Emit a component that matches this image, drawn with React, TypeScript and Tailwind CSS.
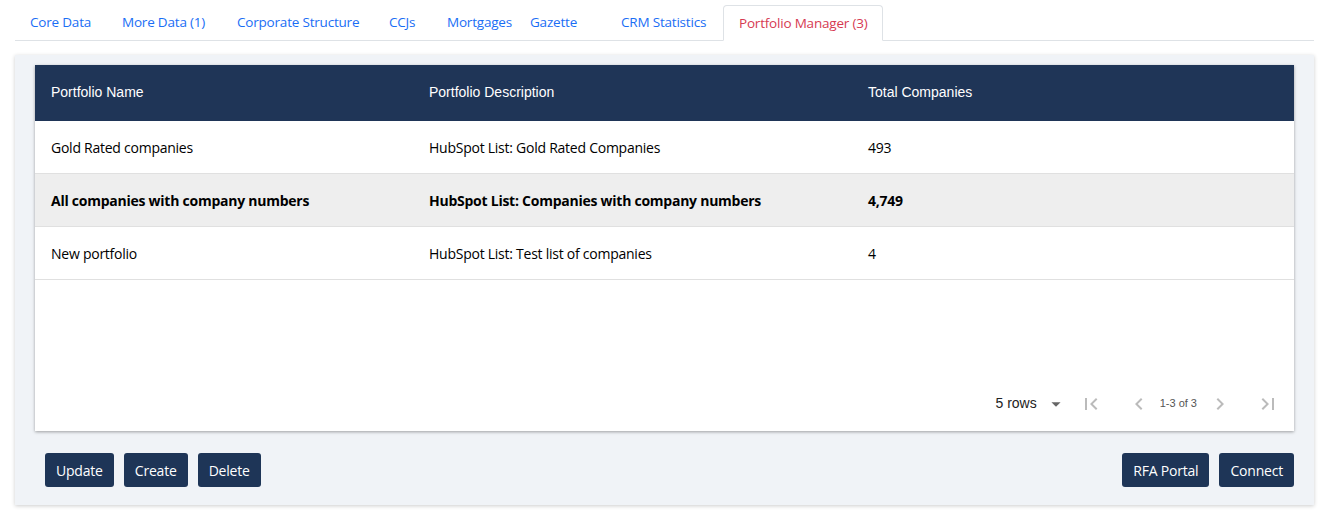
import React from "react"
import { MdArrowDropDown, MdChevronLeft, MdChevronRight, MdFirstPage, MdLastPage } from "react-icons/md"

const tabs = [
    { label: "Core Data", w: "w-[92px]" },
    { label: "More Data (1)", w: "w-[115px]" },
    { label: "Corporate Structure", w: "w-[152px]" },
    { label: "CCJs", w: "w-[58px]" },
    { label: "Mortgages", w: "w-[83px]" },
    { label: "Gazette", w: "w-[91px]" },
    { label: "CRM Statistics", w: "w-[117px]" },
]

const rows = [
    { name: "Gold Rated companies", desc: "HubSpot List: Gold Rated Companies", total: "493" },
    { name: "All companies with company numbers", desc: "HubSpot List: Companies with company numbers", total: "4,749", selected: true },
    { name: "New portfolio", desc: "HubSpot List: Test list of companies", total: "4" },
]

const Btn = ({ children }: { children: React.ReactNode }) => (
    <button className="h-[34px] px-[11px] bg-[#1e3557] text-white rounded-[3px] text-[14px] font-['Open_Sans',sans-serif] tracking-[-0.2px]">
        {children}
    </button>
)

export default function App() {
    return (
        <div className="w-[1329px] h-[510px] bg-white overflow-hidden">
            {/* tabs */}
            <div className="mx-[15px] pt-[5px] flex border-b border-[#dee2e6] font-['Open_Sans',sans-serif] text-[13.5px] tracking-[-0.2px]">
                {tabs.map((t) => (
                    <div key={t.label} className={`${t.w} h-[35px] pl-[15px] flex items-center text-[#1a6ef5] whitespace-nowrap`}>
                        {t.label}
                    </div>
                ))}
                <div className="w-[160px] h-[36px] -mb-px pl-[15px] flex items-center text-[#d63a52] bg-white border border-[#dee2e6] border-b-white rounded-t-[4px] whitespace-nowrap">
                    Portfolio Manager (3)
                </div>
            </div>

            {/* panel */}
            <div className="mx-[15px] mt-[14px] h-[450px] bg-[#f0f3f7] shadow-[0_1px_4px_rgba(0,0,0,0.2)] px-[20px] pt-[10px]">
                <div className="bg-white h-[366px] flex flex-col shadow-[0_1px_3px_rgba(0,0,0,0.35)]">
                    <div className="h-[56px] bg-[#1f3557] grid grid-cols-[378px_439px_1fr] items-center text-white text-[14px] font-['Liberation_Sans',sans-serif]">
                        <div className="pl-[16px] -mt-[2px]">Portfolio Name</div>
                        <div className="pl-[16px] -mt-[2px]">Portfolio Description</div>
                        <div className="pl-[16px] -mt-[2px]">Total Companies</div>
                    </div>
                    {rows.map((r) => (
                        <div
                            key={r.name}
                            className={`h-[53px] grid grid-cols-[378px_439px_1fr] items-center border-b border-[#e0e0e0] text-[14px] text-black font-['Open_Sans',sans-serif] tracking-[-0.25px] ${r.selected ? "bg-[#eeeeee] font-bold" : ""}`}
                        >
                            <div className="pl-[16px] pt-[1px]">{r.name}</div>
                            <div className="pl-[16px] pt-[1px]">{r.desc}</div>
                            <div className="pl-[16px] pt-[1px]">{r.total}</div>
                        </div>
                    ))}
                    <div className="flex-1" />
                    <div className="h-[55px] flex items-center justify-end pr-[14px] font-['Liberation_Sans',sans-serif]">
                        <div className="flex items-center text-[14px] text-[#222]">
                            5 rows
                            <MdArrowDropDown className="ml-[8px] text-[#666]" size={22} />
                        </div>
                        <MdFirstPage className="ml-[12px] text-[#bbb]" size={24} />
                        <MdChevronLeft className="ml-[24px] text-[#bbb]" size={24} />
                        <span className="ml-[9px] text-[11px] text-[#555]">1-3 of 3</span>
                        <MdChevronRight className="ml-[11px] text-[#bbb]" size={24} />
                        <MdLastPage className="ml-[24px] text-[#bbb]" size={24} />
                    </div>
                </div>
                <div className="mt-[22px] pl-[10px] flex justify-between">
                    <div className="flex gap-[10px]">
                        <Btn>Update</Btn>
                        <Btn>Create</Btn>
                        <Btn>Delete</Btn>
                    </div>
                    <div className="flex gap-[10px]">
                        <Btn>RFA Portal</Btn>
                        <Btn>Connect</Btn>
                    </div>
                </div>
            </div>
        </div>
    )
}
